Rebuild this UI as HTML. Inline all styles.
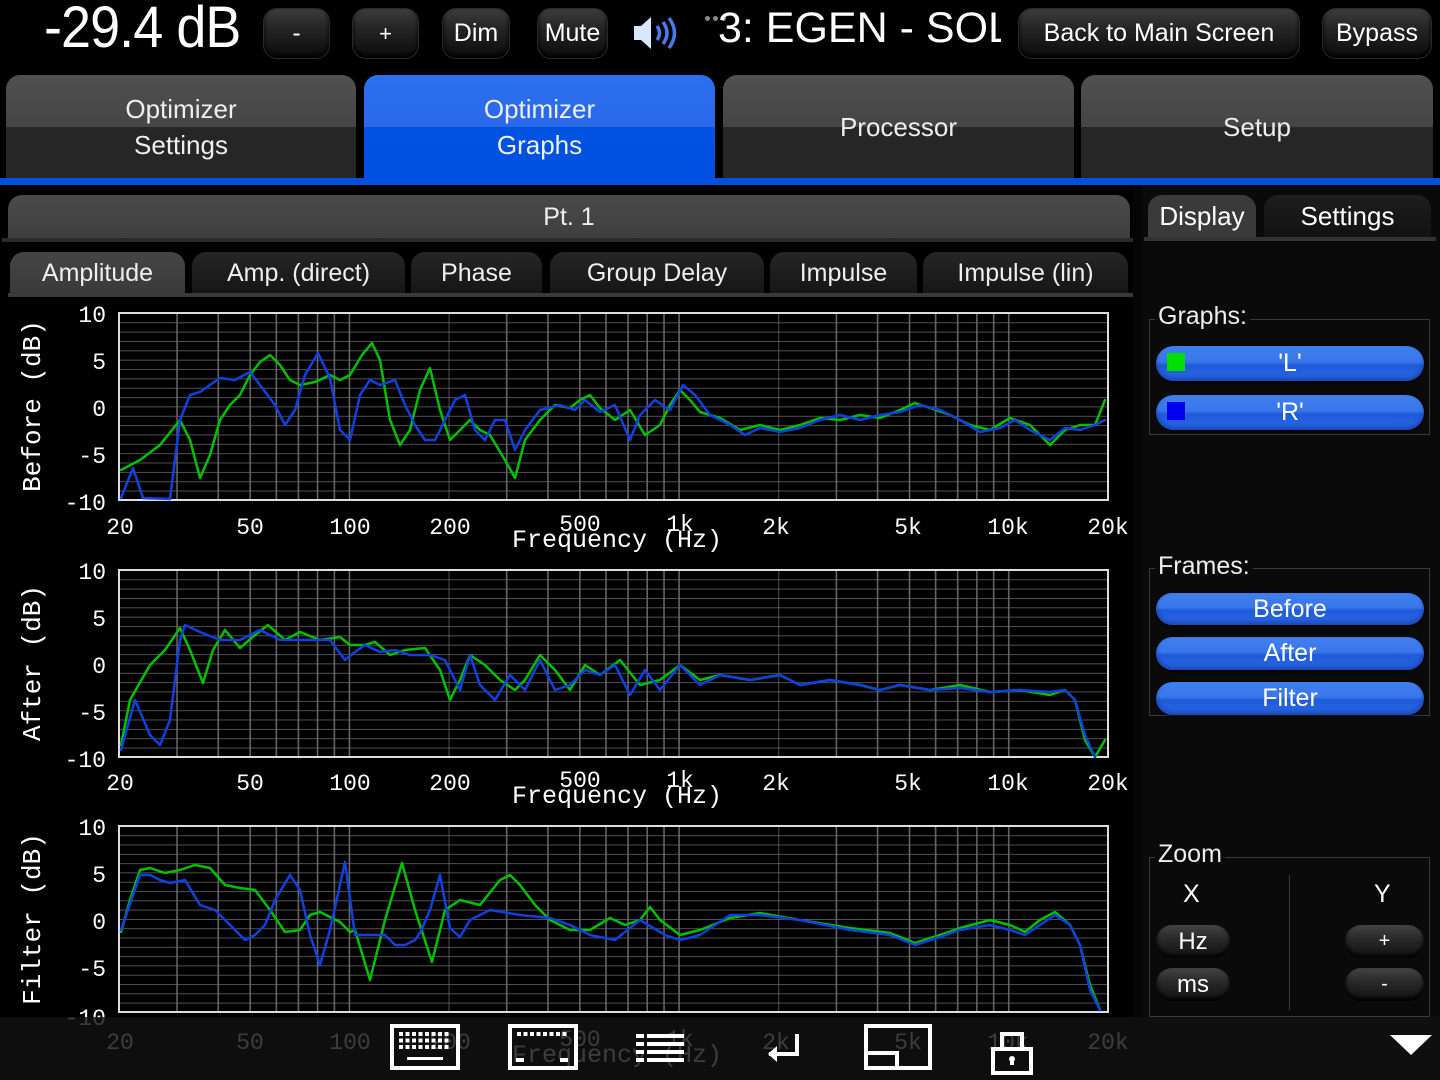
<!DOCTYPE html>
<html><head><meta charset="utf-8">
<style>
*{margin:0;padding:0;box-sizing:border-box}
body{width:1440px;height:1080px;background:#000;position:relative;overflow:hidden;font-family:"Liberation Sans",sans-serif;color:#fff}
.a{position:absolute}
.tb{position:absolute;border-radius:14px;background:linear-gradient(#3c3c3c 0%,#222 45%,#0c0c0c 100%);border:1px solid #2a2a2a;box-shadow:inset 0 -3px 4px #000;color:#fff;font-size:25px;display:flex;align-items:center;justify-content:center}
.tab{position:absolute;top:75px;height:104px;border-radius:14px 14px 0 0;background:linear-gradient(#505050 0%,#454545 50%,#262626 50%,#262626 100%);font-size:26px;text-align:center;display:flex;align-items:center;justify-content:center;line-height:36px;color:#eee}
.tab.on{background:linear-gradient(#2a70f0 0%,#2b68e8 50%,#0052e0 50%,#0050e0 100%)}
.st{position:absolute;top:252px;height:42px;border-radius:14px 14px 0 0;background:linear-gradient(#262626,#151515);font-size:25px;display:flex;align-items:center;justify-content:center;color:#eee}
.st.on{background:linear-gradient(#454545,#3a3a3a)}
.pill{position:absolute;left:1156px;width:268px;border-radius:18px;background:linear-gradient(#3f80f0 0%,#3a76ea 45%,#1f5ad8 55%,#2c68e8 100%);box-shadow:inset 0 -3px 4px #1846b0,0 1px 2px #000;color:#fff;font-size:25px;display:flex;align-items:center;justify-content:center}
.grp{position:absolute;left:1149px;width:281px;border:1px solid #3a3a3a}
.gl{position:absolute;background:#0a0a0a;font-size:25px;color:#eee;padding:0 3px}
.sb{position:absolute;border-radius:16px;background:linear-gradient(#444 0%,#2a2a2a 40%,#111 100%);box-shadow:inset 0 -3px 4px #000;color:#fff;font-size:24px;display:flex;align-items:center;justify-content:center}
</style></head><body>
<div class="a" style="left:44px;top:-6px;font-size:58px;letter-spacing:-1px;transform:scaleX(0.93);transform-origin:0 0">-29.4 dB</div>
<div class="tb" style="left:263px;top:8px;width:67px;height:51px">-</div>
<div class="tb" style="left:352px;top:8px;width:67px;height:51px;font-size:22px">+</div>
<div class="tb" style="left:442px;top:8px;width:68px;height:51px">Dim</div>
<div class="tb" style="left:537px;top:8px;width:71px;height:51px">Mute</div>
<svg class="a" style="left:628px;top:8px" width="60" height="50" viewBox="0 0 60 50">
<path d="M6 18h7l10-9v32l-10-9H6z" fill="#d8e6ff"/>
<path d="M29 18q5 7 0 14M35 14q8 11 0 22M41 10q11 15 0 30" stroke="#4a7ae8" stroke-width="3.5" fill="none"/>
</svg>
<div class="a" style="left:705px;top:8px;width:30px;height:6px"><span style="display:inline-block;width:5px;height:5px;border-radius:50%;background:#888;margin-right:3px"></span><span style="display:inline-block;width:5px;height:5px;border-radius:50%;background:#888;margin-right:3px"></span><span style="display:inline-block;width:5px;height:5px;border-radius:50%;background:#888"></span></div>
<div class="a" style="left:718px;top:4px;width:283px;overflow:hidden;white-space:nowrap;font-size:43px">3: EGEN - SOLO</div>
<div class="tb" style="left:1018px;top:8px;width:282px;height:51px">Back to Main Screen</div>
<div class="tb" style="left:1322px;top:8px;width:110px;height:51px">Bypass</div>

<div class="tab" style="left:6px;width:350px">Optimizer<br>Settings</div>
<div class="tab on" style="left:364px;width:351px">Optimizer<br>Graphs</div>
<div class="tab" style="left:723px;width:351px">Processor</div>
<div class="tab" style="left:1081px;width:352px">Setup</div>
<div class="a" style="left:0;top:178px;width:1440px;height:7px;background:#0050e0"></div>

<div class="a" style="left:1133px;top:185px;width:10px;height:895px;background:#050505"></div>
<div class="a" style="left:1143px;top:185px;width:297px;height:895px;background:#0a0a0a"></div>

<div class="a" style="left:8px;top:195px;width:1122px;height:45px;border-radius:14px 14px 0 0;background:linear-gradient(#4a4a4a,#3e3e3e);font-size:25px;display:flex;align-items:center;justify-content:center;color:#eee">Pt. 1</div>
<div class="a" style="left:2px;top:238px;width:1131px;height:4px;background:#2a2a2a"></div>

<div class="st on" style="left:10px;width:175px">Amplitude</div>
<div class="st" style="left:192px;width:213px">Amp. (direct)</div>
<div class="st" style="left:411px;width:131px">Phase</div>
<div class="st" style="left:550px;width:214px">Group Delay</div>
<div class="st" style="left:770px;width:147px">Impulse</div>
<div class="st" style="left:923px;width:205px">Impulse (lin)</div>
<div class="a" style="left:8px;top:293px;width:1125px;height:4px;background:#3a3a3a"></div>

<div class="a" style="left:1148px;top:195px;width:108px;height:43px;border-radius:14px 14px 0 0;background:#3a3a3a;font-size:26px;display:flex;align-items:center;justify-content:center">Display</div>
<div class="a" style="left:1264px;top:195px;width:167px;height:43px;border-radius:14px 14px 0 0;background:linear-gradient(#1e1e1e,#111);font-size:26px;display:flex;align-items:center;justify-content:center">Settings</div>
<div class="a" style="left:1144px;top:237px;width:292px;height:4px;background:#333"></div>

<div class="grp" style="top:319px;height:116px"></div>
<div class="gl" style="left:1155px;top:302px">Graphs:</div>
<div class="pill" style="top:346px;height:35px"><span style="position:absolute;left:11px;top:7px;width:18px;height:18px;background:#00e000"></span>'L'</div>
<div class="pill" style="top:395px;height:35px"><span style="position:absolute;left:11px;top:7px;width:18px;height:18px;background:#0000f0"></span>'R'</div>

<div class="grp" style="top:568px;height:148px"></div>
<div class="gl" style="left:1155px;top:552px">Frames:</div>
<div class="pill" style="top:593px;height:32px">Before</div>
<div class="pill" style="top:637px;height:33px">After</div>
<div class="pill" style="top:682px;height:33px">Filter</div>

<div class="grp" style="top:857px;height:160px"></div>
<div class="gl" style="left:1155px;top:840px">Zoom</div>
<div class="a" style="left:1289px;top:875px;width:1px;height:135px;background:#3a3a3a"></div>
<div class="a" style="left:1183px;top:880px;font-size:25px">X</div>
<div class="a" style="left:1374px;top:880px;font-size:25px">Y</div>
<div class="sb" style="left:1156px;top:925px;width:74px;height:33px">Hz</div>
<div class="sb" style="left:1156px;top:968px;width:74px;height:33px">ms</div>
<div class="sb" style="left:1345px;top:925px;width:79px;height:33px;font-size:20px">+</div>
<div class="sb" style="left:1345px;top:968px;width:79px;height:33px;font-size:20px">-</div>

<svg class="a" style="left:0;top:0" width="1135" height="1080" viewBox="0 0 1135 1080">
<defs>
<pattern id="vx" patternUnits="userSpaceOnUse" x="119" y="0" width="329.67" height="10">
<g stroke="#6a6a6a" stroke-width="1.5">
<line x1="0" y1="0" x2="0" y2="10"/><line x1="58.05" y1="0" x2="58.05" y2="10"/><line x1="99.24" y1="0" x2="99.24" y2="10"/><line x1="131.19" y1="0" x2="131.19" y2="10"/><line x1="157.3" y1="0" x2="157.3" y2="10"/><line x1="179.37" y1="0" x2="179.37" y2="10"/><line x1="198.5" y1="0" x2="198.5" y2="10"/><line x1="215.35" y1="0" x2="215.35" y2="10"/><line x1="230.42" y1="0" x2="230.42" y2="10"/>
</g></pattern>
<pattern id="hy1" patternUnits="userSpaceOnUse" x="0" y="313" width="10" height="9.35"><line x1="0" y1="0" x2="10" y2="0" stroke="#6a6a6a" stroke-width="1.5"/></pattern>
<pattern id="hy2" patternUnits="userSpaceOnUse" x="0" y="570" width="10" height="9.35"><line x1="0" y1="0" x2="10" y2="0" stroke="#6a6a6a" stroke-width="1.5"/></pattern>
<pattern id="hy3" patternUnits="userSpaceOnUse" x="0" y="826" width="10" height="9.3"><line x1="0" y1="0" x2="10" y2="0" stroke="#6a6a6a" stroke-width="1.5"/></pattern>
</defs>
<g font-family="Liberation Mono, monospace" font-size="23" fill="#fff">
<rect x="119" y="313" width="989" height="187" fill="url(#hy1)"/>
<rect x="119" y="313" width="989" height="187" fill="url(#vx)"/>
<rect x="119" y="313" width="989" height="187" fill="none" stroke="#ddd" stroke-width="2"/>
<g text-anchor="end"><text x="106" y="322">10</text><text x="106" y="369">5</text><text x="106" y="416">0</text><text x="106" y="463">-5</text><text x="106" y="510">-10</text></g>
<g text-anchor="middle"><text x="120" y="534">20</text><text x="250" y="534">50</text><text x="350" y="534">100</text><text x="450" y="534">200</text><text x="580" y="531">500</text><text x="680" y="531">1k</text><text x="776" y="534">2k</text><text x="908" y="534">5k</text><text x="1008" y="534">10k</text><text x="1108" y="534">20k</text>
<text x="617" y="547" font-size="25">Frequency (Hz)</text>
<text transform="translate(40,406) rotate(-90)" font-size="26">Before (dB)</text></g>
<rect x="119" y="570" width="989" height="187" fill="url(#hy2)"/>
<rect x="119" y="570" width="989" height="187" fill="url(#vx)"/>
<rect x="119" y="570" width="989" height="187" fill="none" stroke="#ddd" stroke-width="2"/>
<g text-anchor="end"><text x="106" y="579">10</text><text x="106" y="626">5</text><text x="106" y="673">0</text><text x="106" y="720">-5</text><text x="106" y="767">-10</text></g>
<g text-anchor="middle"><text x="120" y="790">20</text><text x="250" y="790">50</text><text x="350" y="790">100</text><text x="450" y="790">200</text><text x="580" y="787">500</text><text x="680" y="787">1k</text><text x="776" y="790">2k</text><text x="908" y="790">5k</text><text x="1008" y="790">10k</text><text x="1108" y="790">20k</text>
<text x="617" y="803" font-size="25">Frequency (Hz)</text>
<text transform="translate(40,663) rotate(-90)" font-size="26">After (dB)</text></g>
<rect x="119" y="826" width="989" height="186" fill="url(#hy3)"/>
<rect x="119" y="826" width="989" height="186" fill="url(#vx)"/>
<rect x="119" y="826" width="989" height="186" fill="none" stroke="#ddd" stroke-width="2"/>
<g text-anchor="end"><text x="106" y="835">10</text><text x="106" y="882">5</text><text x="106" y="929">0</text><text x="106" y="976">-5</text><text x="106" y="1025">-10</text></g>
<g text-anchor="middle"><text x="120" y="1049">20</text><text x="250" y="1049">50</text><text x="350" y="1049">100</text><text x="450" y="1049">200</text><text x="580" y="1046">500</text><text x="680" y="1046">1k</text><text x="776" y="1049">2k</text><text x="908" y="1049">5k</text><text x="1008" y="1049">10k</text><text x="1108" y="1049">20k</text>
<text x="617" y="1062" font-size="25">Frequency (Hz)</text>
<text transform="translate(40,919) rotate(-90)" font-size="26">Filter (dB)</text></g>
</g>
<g fill="none" stroke-width="2.5" stroke-linejoin="round" stroke-linecap="round">
<polyline stroke="#00c000" points="121,470 140,460 160,445 180,420 190,440 200,478 210,455 220,420 230,405 240,395 250,375 260,362 270,355 280,365 290,380 300,385 315,382 330,375 340,380 350,375 362,355 372,343 380,360 390,420 400,445 410,430 420,390 430,368 440,410 450,440 460,430 470,420 480,430 490,435 505,460 515,478 525,440 540,420 555,405 570,408 580,400 590,395 600,408 615,420 630,410 645,435 660,425 670,405 680,390 690,400 700,412 720,418 740,430 760,425 780,430 800,425 820,418 840,420 860,415 880,418 900,410 915,403 930,408 950,415 970,425 990,430 1010,418 1030,425 1050,445 1065,430 1080,425 1095,425 1105,400"/>
<polyline stroke="#1040e0" points="121,498 133,468 143,498 170,499 180,420 190,395 200,392 210,385 220,378 235,380 250,372 260,385 275,405 285,425 295,410 305,375 318,353 330,378 340,430 350,440 360,395 370,380 380,385 395,380 405,405 415,425 425,440 435,440 445,420 455,400 465,395 475,430 485,440 495,420 505,420 515,450 525,430 540,410 560,405 575,410 585,400 600,412 615,405 630,440 640,415 655,400 670,410 683,385 695,395 710,415 730,425 745,435 760,428 780,432 800,428 820,420 840,415 860,420 880,415 900,412 920,405 940,410 960,420 980,432 1000,428 1015,420 1030,430 1050,440 1065,428 1080,430 1095,425 1105,420"/>
<polyline stroke="#00c000" points="121,745 130,700 150,665 165,650 180,628 190,650 203,683 213,650 225,630 240,648 255,635 268,625 285,640 300,632 320,640 340,637 350,645 365,645 375,642 390,655 405,650 425,648 440,670 450,700 460,680 470,655 485,665 500,680 515,690 525,680 540,655 555,670 570,690 585,665 600,675 620,660 640,685 660,680 680,665 700,680 720,675 750,680 780,675 800,685 830,680 860,685 880,690 900,685 930,690 960,685 990,692 1020,690 1050,695 1065,690 1075,700 1085,740 1095,757 1105,740"/>
<polyline stroke="#1040e0" points="121,750 135,700 150,735 160,745 170,720 180,640 185,625 200,632 220,640 240,640 260,630 280,640 300,640 330,640 345,660 355,652 365,645 380,652 395,650 410,655 430,655 445,660 460,690 470,655 480,685 495,700 510,675 525,690 540,660 555,690 570,685 585,670 600,675 615,665 630,695 645,670 660,690 680,665 700,685 720,675 750,680 780,675 800,685 830,680 860,685 880,690 900,685 930,690 960,688 990,692 1020,690 1050,692 1065,690 1075,700 1085,735 1095,757"/>
<polyline stroke="#00c000" points="121,932 130,900 140,870 150,868 165,873 180,870 195,865 210,868 225,885 240,888 255,890 270,910 285,932 300,930 310,915 320,912 340,922 350,932 355,930 370,980 385,920 402,863 415,910 432,962 445,910 460,900 480,905 500,880 510,875 520,885 535,905 550,920 570,930 590,930 610,918 625,925 640,920 650,907 660,920 680,935 700,930 730,918 760,913 800,920 850,928 890,933 915,943 940,935 960,928 990,920 1010,925 1025,932 1040,920 1055,912 1070,925 1080,945 1090,985 1100,1010"/>
<polyline stroke="#1040e0" points="121,930 140,875 150,875 160,880 170,883 185,880 200,905 215,910 230,925 245,940 255,935 265,925 275,900 290,875 300,890 310,935 320,965 330,930 345,862 355,935 365,935 385,935 395,945 405,945 415,940 420,933 430,910 440,875 450,928 460,937 470,920 490,910 520,915 550,918 570,925 590,935 615,940 640,920 665,935 680,940 700,935 730,915 760,915 800,920 850,930 890,935 915,945 940,937 960,930 990,925 1010,930 1025,935 1040,925 1055,915 1070,925 1080,945 1090,990 1100,1010"/>
</g>
</svg>

<div class="a" style="left:0;top:1017px;width:1440px;height:63px;background:rgba(17,17,17,0.82)"></div>
<svg class="a" style="left:0;top:1017px" width="1440" height="63" viewBox="0 1017 1440 63">
<defs>
<pattern id="kd" patternUnits="userSpaceOnUse" x="399" y="1032" width="6.5" height="6.5"><rect x="0" y="0" width="4" height="4" fill="#fff"/></pattern>
<pattern id="kd2" patternUnits="userSpaceOnUse" x="517" y="1032" width="6.5" height="6.5"><rect x="0" y="0" width="4" height="4" fill="#fff"/></pattern>
</defs>
<g fill="none" stroke="#fff" stroke-width="4">
<rect x="392" y="1026" width="66" height="42"/>
<rect x="510" y="1026" width="66" height="42"/>
<rect x="866" y="1026" width="64" height="42"/>
<path d="M866 1053h31v15"/>
<rect x="993" y="1049" width="38" height="24"/>
<path d="M1002 1049v-15h20v15"/>
<path d="M797 1034v20h-28"/>
</g>
<g fill="#fff">
<path d="M768 1054l9-8v16z"/>
<rect x="399" y="1032" width="52" height="19" fill="url(#kd)"/><rect x="407" y="1057" width="36" height="3"/>
<rect x="517" y="1032" width="52" height="5" fill="url(#kd2)"/><rect x="516" y="1058" width="8" height="4"/><rect x="560" y="1058" width="8" height="4"/>
<rect x="636" y="1034" width="48" height="4"/><rect x="636" y="1042" width="48" height="4"/><rect x="636" y="1050" width="48" height="4"/><rect x="636" y="1058" width="48" height="4"/>
<circle cx="1012" cy="1059" r="3"/><rect x="1010" y="1059" width="4" height="6"/>
<path d="M1390 1035h42l-21 20z"/>
</g>
<g fill="#111"><rect x="644" y="1034" width="3" height="28"/></g>
</svg>
</body></html>
